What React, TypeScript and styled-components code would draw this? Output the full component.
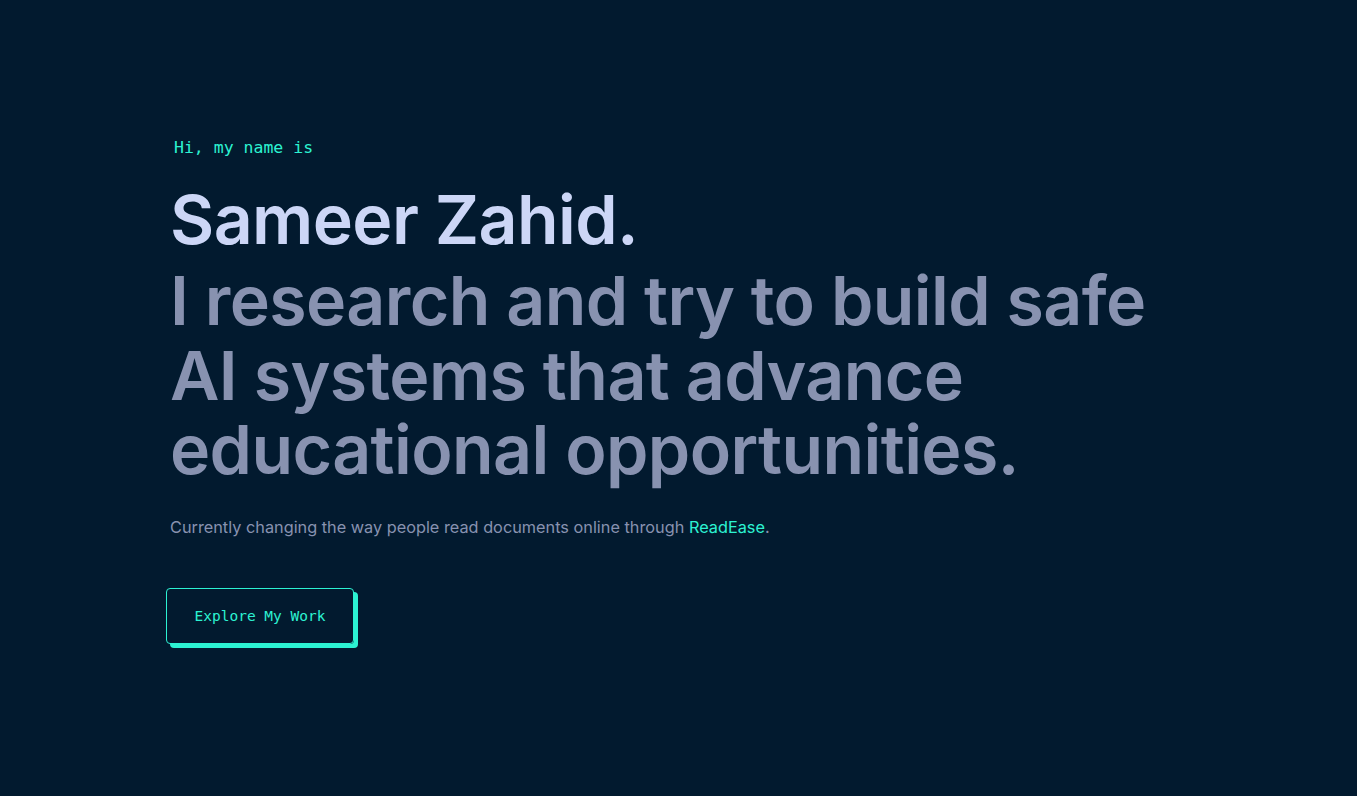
import React from "react";
import styled, { createGlobalStyle } from "styled-components";

const GlobalStyle = createGlobalStyle`
  html, body {
    margin: 0;
    padding: 0;
    background: #021a2f;
  }
  * { box-sizing: border-box; }
`;

const Section = styled.section`
  min-height: 100vh;
  display: flex;
  flex-direction: column;
  justify-content: center;
  align-items: flex-start;
  padding: 0 170px 12px;
  background: #021a2f;
  font-family: "Inter", "Liberation Sans", sans-serif;
`;

const Intro = styled.h1`
  margin: 0 0 26px 4px;
  color: #2cf2d2;
  font-family: "DejaVu Sans Mono", "Liberation Mono", monospace;
  font-size: 16.5px;
  font-weight: 400;
  line-height: 1;
`;

const BigHeading = styled.h2<{ $muted?: boolean }>`
  margin: 0;
  color: ${(p) => (p.$muted ? "#8892b0" : "#ccd6f6")};
  font-size: 68px;
  font-weight: 600;
  line-height: 1.1;
  letter-spacing: -0.6px;
`;

const Name = styled(BigHeading)`
  margin-bottom: 6px;
`;

const Lead = styled.p`
  margin: 30px 0 0;
  color: #8892b0;
  font-size: 16.3px;
  line-height: 1.3;
`;

const Highlight = styled.a`
  color: #2cf2d2;
  text-decoration: none;
`;

const CtaButton = styled.button`
  margin: 50px 0 0 -4px;
  width: 188px;
  height: 56px;
  background: transparent;
  border: 1px solid #2cf2d2;
  border-radius: 4px;
  color: #2cf2d2;
  font-family: "DejaVu Sans Mono", "Liberation Mono", monospace;
  font-size: 14.5px;
  box-shadow: 4px 4px 0 0 #2cf2d2;
  cursor: pointer;
`;

export default function App() {
  return (
    <>
      <GlobalStyle />
      <Section id="hero">
        <Intro>Hi, my name is</Intro>
        <Name>Sameer Zahid.</Name>
        <BigHeading $muted>
          I research and try to build safe
          <br />
          AI systems that advance
          <br />
          educational opportunities.
        </BigHeading>
        <Lead>
          Currently changing the way people read documents online through{" "}
          <Highlight href="#">ReadEase</Highlight>.
        </Lead>
        <CtaButton>Explore My Work</CtaButton>
      </Section>
    </>
  );
}
